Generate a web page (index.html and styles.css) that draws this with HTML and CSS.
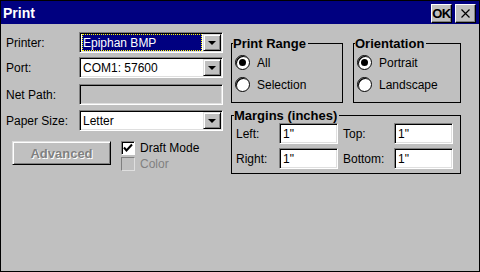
FILE: index.html
```html
<!DOCTYPE html>
<html>
<head>
<meta charset="utf-8">
<link rel="stylesheet" href="styles.css">
</head>
<body>
<div class="window">
  <div class="titlebar">
    <span class="title">Print</span>
    <div class="tb-buttons">
      <div class="tb-btn ok">OK</div>
      <div class="tb-btn close">
        <svg width="9" height="9" viewBox="0 0 9 9"><path d="M0.5 0.5 L8.5 8.5 M8.5 0.5 L0.5 8.5" stroke="#000" stroke-width="1.2" fill="none"/></svg>
      </div>
    </div>
  </div>
  <div class="content">
    <div class="left">
      <div class="row r1">
        <span class="lbl">Printer:</span>
        <div class="combo sunken">
          <div class="field selected"><span>Epiphan BMP</span></div>
          <div class="drop raised"><span class="arrow"></span></div>
        </div>
      </div>
      <div class="row r2">
        <span class="lbl">Port:</span>
        <div class="combo sunken">
          <div class="field"><span>COM1: 57600</span></div>
          <div class="drop raised"><span class="arrow"></span></div>
        </div>
      </div>
      <div class="row r3">
        <span class="lbl">Net Path:</span>
        <div class="combo sunken disabled"></div>
      </div>
      <div class="row r4">
        <span class="lbl">Paper Size:</span>
        <div class="combo sunken">
          <div class="field"><span>Letter</span></div>
          <div class="drop raised"><span class="arrow"></span></div>
        </div>
      </div>
      <div class="bottom-row">
        <div class="advanced raised">Advanced</div>
        <div class="checks">
          <div class="check-row">
            <span class="checkbox">
              <svg width="12" height="12" viewBox="0 0 12 12"><polyline points="2,5.5 4.5,8.5 10,2.5" stroke="#000" stroke-width="2" fill="none"/></svg>
            </span>
            <span>Draft Mode</span>
          </div>
          <div class="check-row off">
            <span class="checkbox"></span>
            <span>Color</span>
          </div>
        </div>
      </div>
    </div>
    <div class="right">
      <div class="group-row">
        <fieldset class="group range">
          <legend>Print Range</legend>
          <div class="radios">
            <div class="radio-row"><span class="radio on"></span><span>All</span></div>
            <div class="radio-row"><span class="radio"></span><span>Selection</span></div>
          </div>
        </fieldset>
        <fieldset class="group orient">
          <legend>Orientation</legend>
          <div class="radios">
            <div class="radio-row"><span class="radio on"></span><span>Portrait</span></div>
            <div class="radio-row"><span class="radio"></span><span>Landscape</span></div>
          </div>
        </fieldset>
      </div>
      <fieldset class="group margins">
        <legend>Margins (inches)</legend>
        <div class="margin-grid">
          <span class="mlbl">Left:</span><div class="edit sunken">1"</div>
          <span class="mlbl">Top:</span><div class="edit sunken">1"</div>
          <span class="mlbl">Right:</span><div class="edit sunken">1"</div>
          <span class="mlbl">Bottom:</span><div class="edit sunken">1"</div>
        </div>
      </fieldset>
    </div>
  </div>
</div>
</body>
</html>
```
FILE: styles.css
```css
* { box-sizing: border-box; }
html, body { margin: 0; padding: 0; }
body {
  width: 480px;
  height: 272px;
  overflow: hidden;
  font-family: "Liberation Sans", Arial, sans-serif;
  font-size: 12px;
  color: #000;
  background: #c0c0c0;
}
.window {
  width: 480px;
  height: 272px;
  border: 1px solid #000;
  background: #c0c0c0;
  display: flex;
  flex-direction: column;
}
.titlebar {
  height: 23px;
  background: #000080;
  display: flex;
  align-items: center;
  justify-content: space-between;
  padding: 0 3px 0 2px;
}
.title {
  color: #fff;
  font-weight: bold;
  font-size: 14px;
}
.tb-buttons {
  display: flex;
  gap: 3px;
  align-items: center;
  margin-top: 1px;
}
.tb-btn {
  width: 21px;
  height: 19px;
  background: #c0c0c0;
  border: 1px solid;
  border-color: #fff #000 #000 #fff;
  box-shadow: inset -1px -1px 0 #808080;
  display: flex;
  align-items: center;
  justify-content: center;
}
.tb-btn.ok {
  font-weight: bold;
  font-size: 13px;
  letter-spacing: -0.5px;
}
.content {
  flex: 1;
  display: flex;
  padding: 8px 0 0 5px;
}
.left {
  width: 225px;
  display: flex;
  flex-direction: column;
}
.row {
  display: flex;
  align-items: center;
}
.r2 { margin-top: 4px; }
.r3 { margin-top: 6px; }
.r4 { margin-top: 5px; }
.lbl { width: 73px; }
.sunken {
  border: 1px solid;
  border-color: #808080 #fff #fff #808080;
  box-shadow: inset 1px 1px 0 #000, inset -1px -1px 0 #dfdfdf;
  background: #fff;
}
.raised {
  background: #c0c0c0;
  border: 1px solid;
  border-color: #dfdfdf #000 #000 #dfdfdf;
  box-shadow: inset 1px 1px 0 #fff, inset -1px -1px 0 #808080;
}
.combo {
  width: 144px;
  height: 21px;
  display: flex;
  padding: 1px 1px 1px 2px;
}
.combo.disabled { background: #c0c0c0; }
.field {
  flex: 1;
  display: flex;
  align-items: center;
  padding-left: 1px;
  margin-right: 1px;
}
.field.selected {
  background: #000080;
  color: #fff;
  outline: 1px dotted #ffff00;
  outline-offset: -1px;
}
.drop {
  width: 18px;
  display: flex;
  align-items: center;
  justify-content: center;
}
.arrow {
  width: 0;
  height: 0;
  border-left: 4px solid transparent;
  border-right: 4px solid transparent;
  border-top: 4px solid #000;
  margin-top: 1px;
}
.bottom-row {
  display: flex;
  margin-top: 10px;
}
.advanced {
  width: 99px;
  height: 24px;
  margin-left: 6px;
  display: flex;
  align-items: center;
  justify-content: center;
  font-weight: bold;
  font-size: 13px;
  color: #808080;
  text-shadow: 1px 1px 0 #fff;
}
.checks {
  margin-left: 10px;
  display: flex;
  flex-direction: column;
  gap: 2px;
}
.check-row {
  display: flex;
  align-items: center;
  gap: 5px;
  height: 14px;
}
.checkbox {
  width: 14px;
  height: 14px;
  background: #fff;
  border: 1px solid;
  border-color: #808080 #fff #fff #808080;
  box-shadow: inset 1px 1px 0 #000;
  display: flex;
  align-items: center;
  justify-content: center;
}
.check-row.off { color: #808080; }
.check-row.off .checkbox {
  background: #c0c0c0;
  border-color: #808080 #dfdfdf #dfdfdf #808080;
  box-shadow: none;
}
.right {
  margin-top: 4px;
  display: flex;
  flex-direction: column;
}
.group-row {
  display: flex;
  gap: 10px;
}
.group {
  margin: 0;
  border: 1px solid #000;
  padding: 0 3px 0 3px;
  min-width: 0;
}
.group legend {
  font-weight: bold;
  font-size: 13px;
  line-height: 15px;
  padding: 0 2px 0 0;
  margin-left: -2px;
}
.range { width: 112px; height: 67px; }
.orient { width: 108px; height: 67px; }
.radios {
  display: flex;
  flex-direction: column;
  gap: 7px;
  margin-top: 4px;
}
.radio-row {
  display: flex;
  align-items: center;
  gap: 7px;
  height: 15px;
}
.radio {
  width: 15px;
  height: 15px;
  border-radius: 50%;
  background: #fff;
  border: 1px solid #000;
  box-shadow: inset 1px 1px 0 #000;
  display: flex;
  align-items: center;
  justify-content: center;
}
.radio.on::after {
  content: "";
  width: 7px;
  height: 7px;
  border-radius: 50%;
  background: #000;
}
.margins {
  width: 230px;
  height: 66px;
  margin-top: 5px;
  padding-left: 4px;
}
.margin-grid {
  display: grid;
  grid-template-columns: 43px 64px 51px 59px;
  row-gap: 4px;
  align-items: center;
}
.edit {
  width: 59px;
  height: 21px;
  padding-left: 3px;
  display: flex;
  align-items: center;
}
```
